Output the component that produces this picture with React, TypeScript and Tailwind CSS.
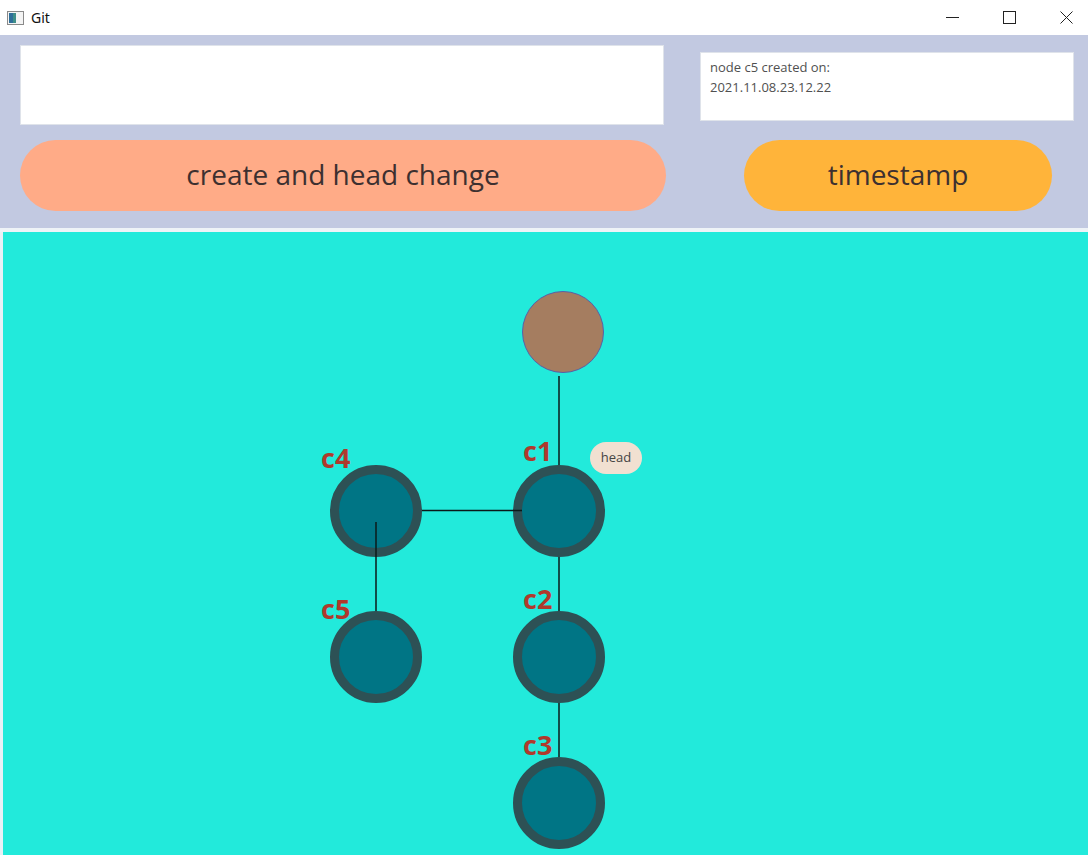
import React from "react";

const font = { fontFamily: '"Open Sans", "Noto Sans", sans-serif' };

function Node({ left, top }: { left: number; top: number }) {
  return (
    <div
      className="absolute w-[92px] h-[92px] rounded-full bg-[#007585] border-[9px] border-[#2d5155]"
      style={{ left, top }}
    />
  );
}

function Label({ text, left, top }: { text: string; left: number; top: number }) {
  return (
    <div
      className="absolute text-[27px] font-bold leading-none text-[#b0392c]"
      style={{ left, top }}
    >
      {text}
    </div>
  );
}

export default function App() {
  return (
    <div className="w-[1088px] h-[855px] overflow-hidden bg-[#eaf0f6] flex flex-col" style={font}>
      {/* title bar */}
      <div className="h-[35px] bg-white flex items-center shrink-0">
        <svg width="17" height="14" viewBox="0 0 17 14" className="ml-[7px]">
          <rect x="0.5" y="0.5" width="16" height="13" fill="#f4f4f4" stroke="#8a8a8a" />
          <rect x="2" y="2" width="7" height="10" fill="#3f8f8a" />
          <rect x="2" y="2" width="4" height="10" fill="#2f6f9a" />
        </svg>
        <span className="ml-[7px] text-[14px] text-[#111]" style={{ fontFamily: '"Noto Sans", sans-serif' }}>Git</span>
        <div className="ml-auto flex items-center h-full gap-[13px]">
          <div className="w-[44px] h-full flex items-center justify-center">
            <svg width="13" height="13" viewBox="0 0 13 13"><line x1="0" y1="6.5" x2="13" y2="6.5" stroke="#222" strokeWidth="1" /></svg>
          </div>
          <div className="w-[44px] h-full flex items-center justify-center">
            <svg width="13" height="13" viewBox="0 0 13 13"><rect x="0.5" y="0.5" width="12" height="12" fill="none" stroke="#222" strokeWidth="1" /></svg>
          </div>
          <div className="w-[44px] h-full flex items-center justify-center">
            <svg width="13" height="13" viewBox="0 0 13 13"><path d="M0.5 0.5 L12.5 12.5 M12.5 0.5 L0.5 12.5" stroke="#222" strokeWidth="1" /></svg>
          </div>
        </div>
      </div>

      {/* top panel */}
      <div className="h-[193px] bg-[#c2c9e1] flex pl-[20px] pt-[10px] shrink-0">
        <div className="w-[646px] flex flex-col">
          <div className="w-[644px] h-[80px] bg-white border border-[#dfe3ea]" />
          <div className="mt-[15px] h-[71px] pb-[4px] rounded-full bg-[#ffab87] flex items-center justify-center text-[28px] text-[#3d3030]">
            create and head change
          </div>
        </div>
        <div className="ml-[34px] w-[374px] flex flex-col">
          <div className="mt-[7px] h-[69px] bg-white border border-[#dfe3ea] px-[9px] pt-[4px] text-[13px] leading-[20px] text-[#505050]">
            <div>node c5 created on:</div>
            <div>2021.11.08.23.12.22</div>
          </div>
          <div className="mt-[19px] ml-[44px] w-[308px] h-[71px] pb-[4px] rounded-full bg-[#ffb43a] flex items-center justify-center text-[28px] text-[#3d3030]">
            timestamp
          </div>
        </div>
      </div>

      {/* separator */}
      <div className="h-[4px] bg-[#eef3f7] shrink-0" />

      {/* canvas */}
      <div className="ml-[3px] flex-1 bg-[#22eadb] relative">
        <div
          className="absolute w-[82px] h-[82px] rounded-full bg-[#a57d60] border border-[#5760a8]"
          style={{ left: 519, top: 59 }}
        />
        <Node left={510} top={233} />
        <Node left={327} top={233} />
        <Node left={327} top={379} />
        <Node left={510} top={379} />
        <Node left={510} top={525} />

        <svg className="absolute left-0 top-0" width="1085" height="623">
          <line x1="556" y1="144" x2="556" y2="233" stroke="#0b1a1a" strokeWidth="1.5" />
          <line x1="419" y1="278.5" x2="519" y2="278.5" stroke="#0b1a1a" strokeWidth="1.5" />
          <line x1="373" y1="290" x2="373" y2="379" stroke="#0b1a1a" strokeWidth="1.5" />
          <line x1="556" y1="325" x2="556" y2="379" stroke="#0b1a1a" strokeWidth="1.5" />
          <line x1="556" y1="471" x2="556" y2="525" stroke="#0b1a1a" strokeWidth="1.5" />
        </svg>

        <Label text="c4" left={318} top={212} />
        <Label text="c1" left={520} top={205} />
        <Label text="c5" left={318} top={363} />
        <Label text="c2" left={520} top={353} />
        <Label text="c3" left={520} top={499} />

        <div
          className="absolute w-[52px] h-[32px] rounded-full bg-[#f1e0d1] flex items-center justify-center text-[13px] text-[#444]"
          style={{ left: 587, top: 210 }}
        >
          head
        </div>
      </div>
    </div>
  );
}
